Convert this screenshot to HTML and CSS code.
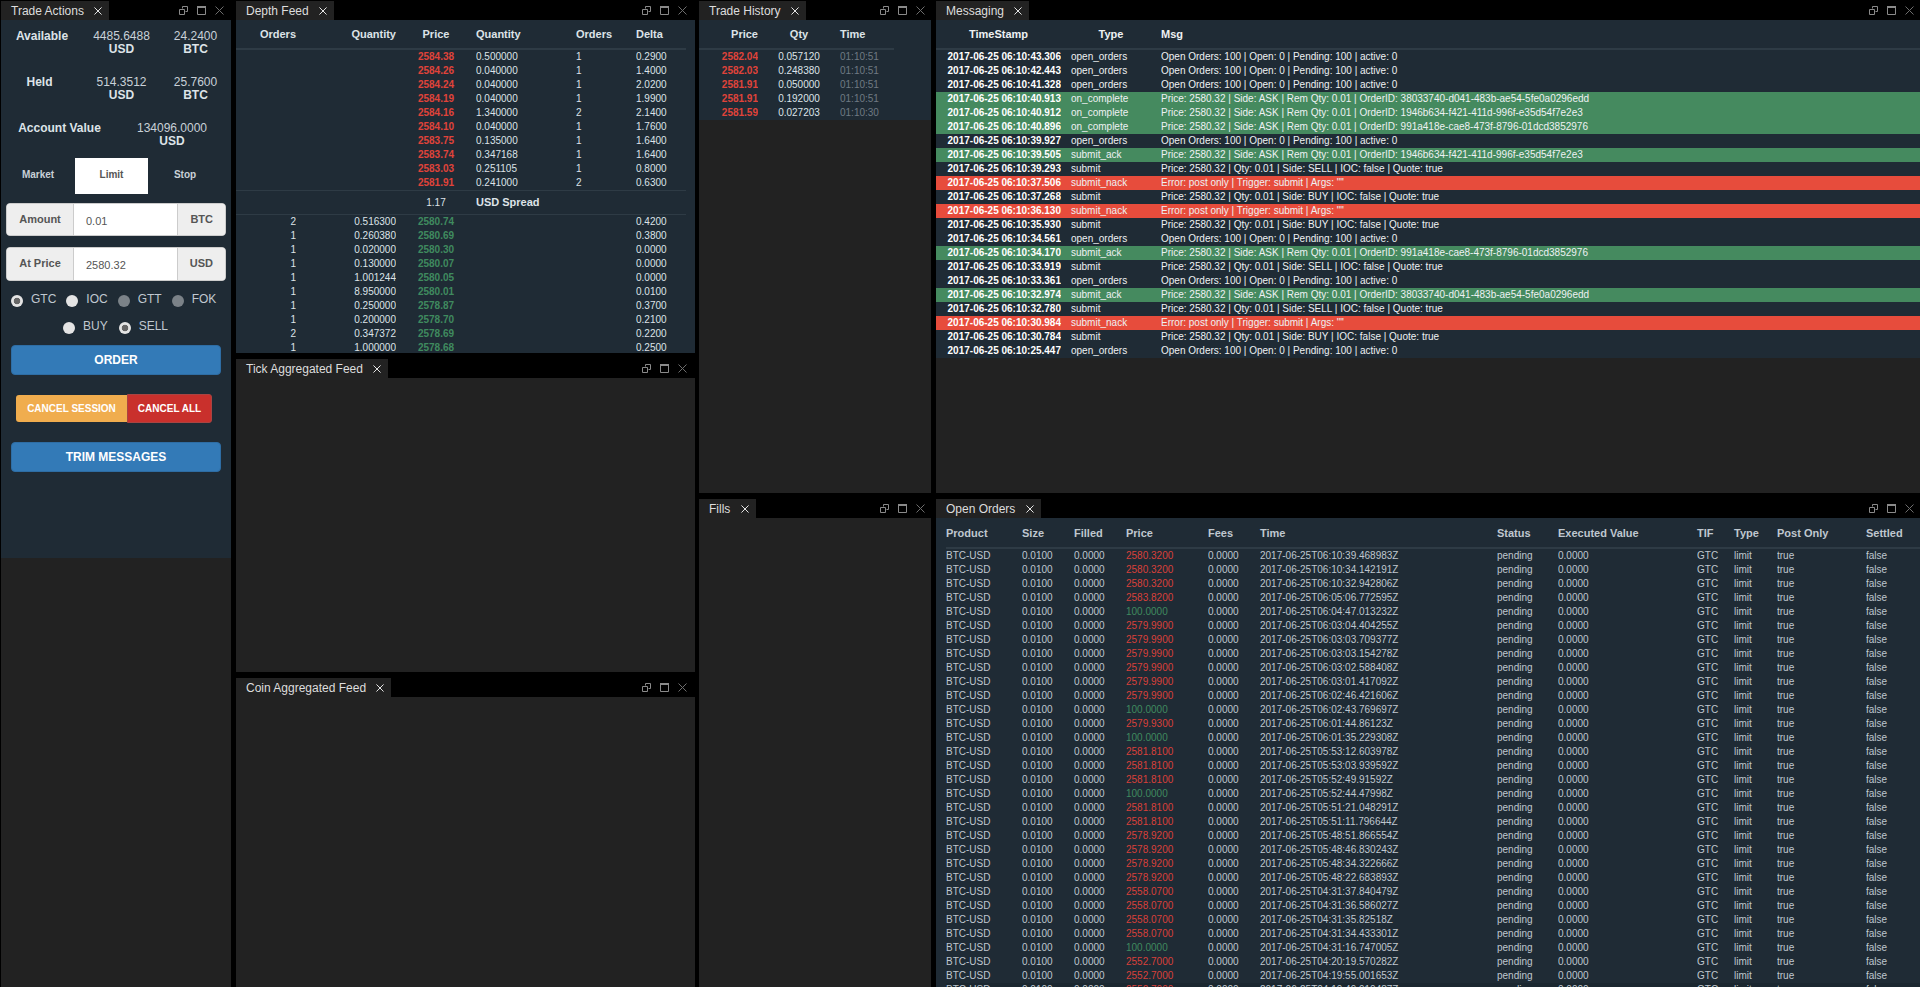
FILE: index.html
```html
<!DOCTYPE html>
<html lang="en">
<head>
    <meta charset="UTF-8">
    <title>Trading Dashboard</title>
    <link rel="stylesheet" href="styles.css">
</head>
<body>
    <svg class="icon-defs" width="0" height="0">
        <symbol id="ic-close" viewBox="0 0 9 9"><path d="M.5.5l8 8M8.5.5l-8 8" fill="none" stroke="currentColor"/></symbol>
        <symbol id="ic-restore" viewBox="0 0 9 9"><path d="M3.5 2.5v-2h5v5h-2M.5 3.5h5v5h-5z" fill="none" stroke="currentColor"/></symbol>
        <symbol id="ic-max" viewBox="0 0 9 9"><path d="M.5 1h8M.5.5v8h8v-8" fill="none" stroke="currentColor" stroke-width="1"/><path d="M0 0h9v2H0z" fill="currentColor"/></symbol>
    </svg>

    <div class="layout">
        <!-- Column 1 -->
        <div class="column col-actions">
            <section class="pane fill">
                <div class="pane-head">
                    <div class="tab">Trade Actions <svg class="tab-close"><use href="#ic-close"/></svg></div>
                    <div class="win-icons">
                        <svg class="ic-restore"><use href="#ic-restore"/></svg>
                        <svg class="ic-max"><use href="#ic-max"/></svg>
                        <svg class="ic-close"><use href="#ic-close"/></svg>
                    </div>
                </div>
                <div class="pane-body">
                    <div class="actions">
                        <div class="balance">
                            <div class="balance-label">Available</div>
                            <div>4485.6488<b>USD</b></div>
                            <div>24.2400<b>BTC</b></div>
                        </div>
                        <div class="balance">
                            <div class="balance-label held-label">Held</div>
                            <div>514.3512<b>USD</b></div>
                            <div>25.7600<b>BTC</b></div>
                        </div>
                        <div class="balance balance-wide">
                            <div class="balance-label">Account Value</div>
                            <div>134096.0000<b>USD</b></div>
                        </div>

                        <div class="order-tabs">
                            <div class="order-tab">Market</div>
                            <div class="order-tab active">Limit</div>
                            <div class="order-tab">Stop</div>
                        </div>

                        <div class="input-group amount-group">
                            <span class="addon addon-left">Amount</span>
                            <input class="field" type="text" value="0.01">
                            <span class="addon addon-right">BTC</span>
                        </div>
                        <div class="input-group price-group">
                            <span class="addon addon-left">At Price</span>
                            <input class="field" type="text" value="2580.32">
                            <span class="addon addon-right">USD</span>
                        </div>

                        <div class="radios radios-tif">
                            <label><input class="radio" type="radio" name="tif" checked>GTC</label>
                            <label><input class="radio" type="radio" name="tif">IOC</label>
                            <label><input class="radio" type="radio" name="tif" disabled>GTT</label>
                            <label><input class="radio" type="radio" name="tif" disabled>FOK</label>
                        </div>
                        <div class="radios radios-side">
                            <label><input class="radio" type="radio" name="side">BUY</label>
                            <label><input class="radio" type="radio" name="side" checked>SELL</label>
                        </div>

                        <button class="btn btn-blue btn-order">ORDER</button>
                        <div class="cancel-group">
                            <button class="btn-cancel session">CANCEL SESSION</button>
                            <button class="btn-cancel all">CANCEL ALL</button>
                        </div>
                        <button class="btn btn-blue btn-trim">TRIM MESSAGES</button>
                    </div>
                </div>
            </section>
        </div>

        <!-- Column 2 -->
        <div class="column col-depth">
            <section class="pane depth-pane">
                <div class="pane-head">
                    <div class="tab">Depth Feed <svg class="tab-close"><use href="#ic-close"/></svg></div>
                    <div class="win-icons">
                        <svg class="ic-restore"><use href="#ic-restore"/></svg>
                        <svg class="ic-max"><use href="#ic-max"/></svg>
                        <svg class="ic-close"><use href="#ic-close"/></svg>
                    </div>
                </div>
                <div class="pane-body navy">
                    <table class="grid depth-table">
                        <colgroup><col class="d1"><col class="d2"><col class="d3"><col class="d4"><col class="d5"><col class="d6"></colgroup>
                        <thead>
                            <tr><th class="right">Orders</th><th class="right">Quantity</th><th class="center">Price</th><th>Quantity</th><th>Orders</th><th>Delta</th></tr>
                        </thead>
                        <tbody>
                            <tr><td></td><td></td><td class="center ask">2584.38</td><td>0.500000</td><td>1</td><td>0.2900</td></tr>
                            <tr><td></td><td></td><td class="center ask">2584.26</td><td>0.040000</td><td>1</td><td>1.4000</td></tr>
                            <tr><td></td><td></td><td class="center ask">2584.24</td><td>0.040000</td><td>1</td><td>2.0200</td></tr>
                            <tr><td></td><td></td><td class="center ask">2584.19</td><td>0.040000</td><td>1</td><td>1.9900</td></tr>
                            <tr><td></td><td></td><td class="center ask">2584.16</td><td>1.340000</td><td>2</td><td>2.1400</td></tr>
                            <tr><td></td><td></td><td class="center ask">2584.10</td><td>0.040000</td><td>1</td><td>1.7600</td></tr>
                            <tr><td></td><td></td><td class="center ask">2583.75</td><td>0.135000</td><td>1</td><td>1.6400</td></tr>
                            <tr><td></td><td></td><td class="center ask">2583.74</td><td>0.347168</td><td>1</td><td>1.6400</td></tr>
                            <tr><td></td><td></td><td class="center ask">2583.03</td><td>0.251105</td><td>1</td><td>0.8000</td></tr>
                            <tr><td></td><td></td><td class="center ask">2581.91</td><td>0.241000</td><td>2</td><td>0.6300</td></tr>
                            <tr class="spread"><td></td><td></td><td class="center">1.17</td><td colspan="3"><b>USD Spread</b></td></tr>
                            <tr><td class="right">2</td><td class="right">0.516300</td><td class="center bid">2580.74</td><td></td><td></td><td>0.4200</td></tr>
                            <tr><td class="right">1</td><td class="right">0.260380</td><td class="center bid">2580.69</td><td></td><td></td><td>0.3800</td></tr>
                            <tr><td class="right">1</td><td class="right">0.020000</td><td class="center bid">2580.30</td><td></td><td></td><td>0.0000</td></tr>
                            <tr><td class="right">1</td><td class="right">0.130000</td><td class="center bid">2580.07</td><td></td><td></td><td>0.0000</td></tr>
                            <tr><td class="right">1</td><td class="right">1.001244</td><td class="center bid">2580.05</td><td></td><td></td><td>0.0000</td></tr>
                            <tr><td class="right">1</td><td class="right">8.950000</td><td class="center bid">2580.01</td><td></td><td></td><td>0.0100</td></tr>
                            <tr><td class="right">1</td><td class="right">0.250000</td><td class="center bid">2578.87</td><td></td><td></td><td>0.3700</td></tr>
                            <tr><td class="right">1</td><td class="right">0.200000</td><td class="center bid">2578.70</td><td></td><td></td><td>0.2100</td></tr>
                            <tr><td class="right">2</td><td class="right">0.347372</td><td class="center bid">2578.69</td><td></td><td></td><td>0.2200</td></tr>
                            <tr><td class="right">1</td><td class="right">1.000000</td><td class="center bid">2578.68</td><td></td><td></td><td>0.2500</td></tr>
                        </tbody>
                    </table>
                </div>
            </section>
            <section class="pane tick-pane">
                <div class="pane-head">
                    <div class="tab">Tick Aggregated Feed <svg class="tab-close"><use href="#ic-close"/></svg></div>
                    <div class="win-icons">
                        <svg class="ic-restore"><use href="#ic-restore"/></svg>
                        <svg class="ic-max"><use href="#ic-max"/></svg>
                        <svg class="ic-close"><use href="#ic-close"/></svg>
                    </div>
                </div>
                <div class="pane-body"></div>
            </section>
            <section class="pane fill">
                <div class="pane-head">
                    <div class="tab">Coin Aggregated Feed <svg class="tab-close"><use href="#ic-close"/></svg></div>
                    <div class="win-icons">
                        <svg class="ic-restore"><use href="#ic-restore"/></svg>
                        <svg class="ic-max"><use href="#ic-max"/></svg>
                        <svg class="ic-close"><use href="#ic-close"/></svg>
                    </div>
                </div>
                <div class="pane-body"></div>
            </section>
        </div>

        <!-- Column 3 -->
        <div class="column col-history">
            <section class="pane top-pane">
                <div class="pane-head">
                    <div class="tab">Trade History <svg class="tab-close"><use href="#ic-close"/></svg></div>
                    <div class="win-icons">
                        <svg class="ic-restore"><use href="#ic-restore"/></svg>
                        <svg class="ic-max"><use href="#ic-max"/></svg>
                        <svg class="ic-close"><use href="#ic-close"/></svg>
                    </div>
                </div>
                <div class="pane-body">
                    <div class="navy history-block">
                        <table class="grid history-table">
                            <colgroup><col class="h1"><col class="h2"><col class="h3"></colgroup>
                            <thead>
                                <tr><th class="right">Price</th><th class="center">Qty</th><th>Time</th></tr>
                            </thead>
                            <tbody>
                                <tr><td class="right ask">2582.04</td><td class="center">0.057120</td><td class="muted">01:10:51</td></tr>
                                <tr><td class="right ask">2582.03</td><td class="center">0.248380</td><td class="muted">01:10:51</td></tr>
                                <tr><td class="right ask">2581.91</td><td class="center">0.050000</td><td class="muted">01:10:51</td></tr>
                                <tr><td class="right ask">2581.91</td><td class="center">0.192000</td><td class="muted">01:10:51</td></tr>
                                <tr><td class="right ask">2581.59</td><td class="center">0.027203</td><td class="muted">01:10:30</td></tr>
                            </tbody>
                        </table>
                    </div>
                </div>
            </section>
            <section class="pane fill">
                <div class="pane-head">
                    <div class="tab">Fills <svg class="tab-close"><use href="#ic-close"/></svg></div>
                    <div class="win-icons">
                        <svg class="ic-restore"><use href="#ic-restore"/></svg>
                        <svg class="ic-max"><use href="#ic-max"/></svg>
                        <svg class="ic-close"><use href="#ic-close"/></svg>
                    </div>
                </div>
                <div class="pane-body"></div>
            </section>
        </div>

        <!-- Column 4 -->
        <div class="column col-messages">
            <section class="pane top-pane">
                <div class="pane-head">
                    <div class="tab">Messaging <svg class="tab-close"><use href="#ic-close"/></svg></div>
                    <div class="win-icons">
                        <svg class="ic-restore"><use href="#ic-restore"/></svg>
                        <svg class="ic-max"><use href="#ic-max"/></svg>
                        <svg class="ic-close"><use href="#ic-close"/></svg>
                    </div>
                </div>
                <div class="pane-body">
                    <table class="grid msg-table navy">
                        <colgroup><col class="m1"><col class="m2"><col class="m3"></colgroup>
                        <thead>
                            <tr><th class="center">TimeStamp</th><th class="center">Type</th><th>Msg</th></tr>
                        </thead>
                        <tbody>
                            <tr><td class="ts">2017-06-25 06:10:43.306</td><td class="type">open_orders</td><td>Open Orders: 100 | Open: 0 | Pending: 100 | active: 0</td></tr>
                            <tr><td class="ts">2017-06-25 06:10:42.443</td><td class="type">open_orders</td><td>Open Orders: 100 | Open: 0 | Pending: 100 | active: 0</td></tr>
                            <tr><td class="ts">2017-06-25 06:10:41.328</td><td class="type">open_orders</td><td>Open Orders: 100 | Open: 0 | Pending: 100 | active: 0</td></tr>
                            <tr class="ok"><td class="ts">2017-06-25 06:10:40.913</td><td class="type">on_complete</td><td>Price: 2580.32 | Side: ASK | Rem Qty: 0.01 | OrderID: 38033740-d041-483b-ae54-5fe0a0296edd</td></tr>
                            <tr class="ok"><td class="ts">2017-06-25 06:10:40.912</td><td class="type">on_complete</td><td>Price: 2580.32 | Side: ASK | Rem Qty: 0.01 | OrderID: 1946b634-f421-411d-996f-e35d54f7e2e3</td></tr>
                            <tr class="ok"><td class="ts">2017-06-25 06:10:40.896</td><td class="type">on_complete</td><td>Price: 2580.32 | Side: ASK | Rem Qty: 0.01 | OrderID: 991a418e-cae8-473f-8796-01dcd3852976</td></tr>
                            <tr><td class="ts">2017-06-25 06:10:39.927</td><td class="type">open_orders</td><td>Open Orders: 100 | Open: 0 | Pending: 100 | active: 0</td></tr>
                            <tr class="ok"><td class="ts">2017-06-25 06:10:39.505</td><td class="type">submit_ack</td><td>Price: 2580.32 | Side: ASK | Rem Qty: 0.01 | OrderID: 1946b634-f421-411d-996f-e35d54f7e2e3</td></tr>
                            <tr><td class="ts">2017-06-25 06:10:39.293</td><td class="type">submit</td><td>Price: 2580.32 | Qty: 0.01 | Side: SELL | IOC: false | Quote: true</td></tr>
                            <tr class="err"><td class="ts">2017-06-25 06:10:37.506</td><td class="type">submit_nack</td><td>Error: post only | Trigger: submit | Args: ""</td></tr>
                            <tr><td class="ts">2017-06-25 06:10:37.268</td><td class="type">submit</td><td>Price: 2580.32 | Qty: 0.01 | Side: BUY | IOC: false | Quote: true</td></tr>
                            <tr class="err"><td class="ts">2017-06-25 06:10:36.130</td><td class="type">submit_nack</td><td>Error: post only | Trigger: submit | Args: ""</td></tr>
                            <tr><td class="ts">2017-06-25 06:10:35.930</td><td class="type">submit</td><td>Price: 2580.32 | Qty: 0.01 | Side: BUY | IOC: false | Quote: true</td></tr>
                            <tr><td class="ts">2017-06-25 06:10:34.561</td><td class="type">open_orders</td><td>Open Orders: 100 | Open: 0 | Pending: 100 | active: 0</td></tr>
                            <tr class="ok"><td class="ts">2017-06-25 06:10:34.170</td><td class="type">submit_ack</td><td>Price: 2580.32 | Side: ASK | Rem Qty: 0.01 | OrderID: 991a418e-cae8-473f-8796-01dcd3852976</td></tr>
                            <tr><td class="ts">2017-06-25 06:10:33.919</td><td class="type">submit</td><td>Price: 2580.32 | Qty: 0.01 | Side: SELL | IOC: false | Quote: true</td></tr>
                            <tr><td class="ts">2017-06-25 06:10:33.361</td><td class="type">open_orders</td><td>Open Orders: 100 | Open: 0 | Pending: 100 | active: 0</td></tr>
                            <tr class="ok"><td class="ts">2017-06-25 06:10:32.974</td><td class="type">submit_ack</td><td>Price: 2580.32 | Side: ASK | Rem Qty: 0.01 | OrderID: 38033740-d041-483b-ae54-5fe0a0296edd</td></tr>
                            <tr><td class="ts">2017-06-25 06:10:32.780</td><td class="type">submit</td><td>Price: 2580.32 | Qty: 0.01 | Side: SELL | IOC: false | Quote: true</td></tr>
                            <tr class="err"><td class="ts">2017-06-25 06:10:30.984</td><td class="type">submit_nack</td><td>Error: post only | Trigger: submit | Args: ""</td></tr>
                            <tr><td class="ts">2017-06-25 06:10:30.784</td><td class="type">submit</td><td>Price: 2580.32 | Qty: 0.01 | Side: BUY | IOC: false | Quote: true</td></tr>
                            <tr><td class="ts">2017-06-25 06:10:25.447</td><td class="type">open_orders</td><td>Open Orders: 100 | Open: 0 | Pending: 100 | active: 0</td></tr>
                        </tbody>
                    </table>
                </div>
            </section>
            <section class="pane fill">
                <div class="pane-head">
                    <div class="tab">Open Orders <svg class="tab-close"><use href="#ic-close"/></svg></div>
                    <div class="win-icons">
                        <svg class="ic-restore"><use href="#ic-restore"/></svg>
                        <svg class="ic-max"><use href="#ic-max"/></svg>
                        <svg class="ic-close"><use href="#ic-close"/></svg>
                    </div>
                </div>
                <div class="pane-body navy orders-body">
                    <table class="grid orders-table">
                        <colgroup><col class="o1"><col class="o2"><col class="o2"><col class="o4"><col class="o2"><col class="o6"><col class="o7"><col class="o8"><col class="o9"><col class="o10"><col class="o11"><col class="o12"></colgroup>
                        <thead>
                            <tr><th>Product</th><th>Size</th><th>Filled</th><th>Price</th><th>Fees</th><th>Time</th><th>Status</th><th>Executed Value</th><th>TIF</th><th>Type</th><th>Post Only</th><th>Settled</th></tr>
                        </thead>
                        <tbody>
                            <tr><td>BTC-USD</td><td>0.0100</td><td>0.0000</td><td class="sell">2580.3200</td><td>0.0000</td><td>2017-06-25T06:10:39.468983Z</td><td>pending</td><td>0.0000</td><td>GTC</td><td>limit</td><td>true</td><td>false</td></tr>
                            <tr><td>BTC-USD</td><td>0.0100</td><td>0.0000</td><td class="sell">2580.3200</td><td>0.0000</td><td>2017-06-25T06:10:34.142191Z</td><td>pending</td><td>0.0000</td><td>GTC</td><td>limit</td><td>true</td><td>false</td></tr>
                            <tr><td>BTC-USD</td><td>0.0100</td><td>0.0000</td><td class="sell">2580.3200</td><td>0.0000</td><td>2017-06-25T06:10:32.942806Z</td><td>pending</td><td>0.0000</td><td>GTC</td><td>limit</td><td>true</td><td>false</td></tr>
                            <tr><td>BTC-USD</td><td>0.0100</td><td>0.0000</td><td class="sell">2583.8200</td><td>0.0000</td><td>2017-06-25T06:05:06.772595Z</td><td>pending</td><td>0.0000</td><td>GTC</td><td>limit</td><td>true</td><td>false</td></tr>
                            <tr><td>BTC-USD</td><td>0.0100</td><td>0.0000</td><td class="buy">100.0000</td><td>0.0000</td><td>2017-06-25T06:04:47.013232Z</td><td>pending</td><td>0.0000</td><td>GTC</td><td>limit</td><td>true</td><td>false</td></tr>
                            <tr><td>BTC-USD</td><td>0.0100</td><td>0.0000</td><td class="sell">2579.9900</td><td>0.0000</td><td>2017-06-25T06:03:04.404255Z</td><td>pending</td><td>0.0000</td><td>GTC</td><td>limit</td><td>true</td><td>false</td></tr>
                            <tr><td>BTC-USD</td><td>0.0100</td><td>0.0000</td><td class="sell">2579.9900</td><td>0.0000</td><td>2017-06-25T06:03:03.709377Z</td><td>pending</td><td>0.0000</td><td>GTC</td><td>limit</td><td>true</td><td>false</td></tr>
                            <tr><td>BTC-USD</td><td>0.0100</td><td>0.0000</td><td class="sell">2579.9900</td><td>0.0000</td><td>2017-06-25T06:03:03.154278Z</td><td>pending</td><td>0.0000</td><td>GTC</td><td>limit</td><td>true</td><td>false</td></tr>
                            <tr><td>BTC-USD</td><td>0.0100</td><td>0.0000</td><td class="sell">2579.9900</td><td>0.0000</td><td>2017-06-25T06:03:02.588408Z</td><td>pending</td><td>0.0000</td><td>GTC</td><td>limit</td><td>true</td><td>false</td></tr>
                            <tr><td>BTC-USD</td><td>0.0100</td><td>0.0000</td><td class="sell">2579.9900</td><td>0.0000</td><td>2017-06-25T06:03:01.417092Z</td><td>pending</td><td>0.0000</td><td>GTC</td><td>limit</td><td>true</td><td>false</td></tr>
                            <tr><td>BTC-USD</td><td>0.0100</td><td>0.0000</td><td class="sell">2579.9900</td><td>0.0000</td><td>2017-06-25T06:02:46.421606Z</td><td>pending</td><td>0.0000</td><td>GTC</td><td>limit</td><td>true</td><td>false</td></tr>
                            <tr><td>BTC-USD</td><td>0.0100</td><td>0.0000</td><td class="buy">100.0000</td><td>0.0000</td><td>2017-06-25T06:02:43.769697Z</td><td>pending</td><td>0.0000</td><td>GTC</td><td>limit</td><td>true</td><td>false</td></tr>
                            <tr><td>BTC-USD</td><td>0.0100</td><td>0.0000</td><td class="sell">2579.9300</td><td>0.0000</td><td>2017-06-25T06:01:44.86123Z</td><td>pending</td><td>0.0000</td><td>GTC</td><td>limit</td><td>true</td><td>false</td></tr>
                            <tr><td>BTC-USD</td><td>0.0100</td><td>0.0000</td><td class="buy">100.0000</td><td>0.0000</td><td>2017-06-25T06:01:35.229308Z</td><td>pending</td><td>0.0000</td><td>GTC</td><td>limit</td><td>true</td><td>false</td></tr>
                            <tr><td>BTC-USD</td><td>0.0100</td><td>0.0000</td><td class="sell">2581.8100</td><td>0.0000</td><td>2017-06-25T05:53:12.603978Z</td><td>pending</td><td>0.0000</td><td>GTC</td><td>limit</td><td>true</td><td>false</td></tr>
                            <tr><td>BTC-USD</td><td>0.0100</td><td>0.0000</td><td class="sell">2581.8100</td><td>0.0000</td><td>2017-06-25T05:53:03.939592Z</td><td>pending</td><td>0.0000</td><td>GTC</td><td>limit</td><td>true</td><td>false</td></tr>
                            <tr><td>BTC-USD</td><td>0.0100</td><td>0.0000</td><td class="sell">2581.8100</td><td>0.0000</td><td>2017-06-25T05:52:49.91592Z</td><td>pending</td><td>0.0000</td><td>GTC</td><td>limit</td><td>true</td><td>false</td></tr>
                            <tr><td>BTC-USD</td><td>0.0100</td><td>0.0000</td><td class="buy">100.0000</td><td>0.0000</td><td>2017-06-25T05:52:44.47998Z</td><td>pending</td><td>0.0000</td><td>GTC</td><td>limit</td><td>true</td><td>false</td></tr>
                            <tr><td>BTC-USD</td><td>0.0100</td><td>0.0000</td><td class="sell">2581.8100</td><td>0.0000</td><td>2017-06-25T05:51:21.048291Z</td><td>pending</td><td>0.0000</td><td>GTC</td><td>limit</td><td>true</td><td>false</td></tr>
                            <tr><td>BTC-USD</td><td>0.0100</td><td>0.0000</td><td class="sell">2581.8100</td><td>0.0000</td><td>2017-06-25T05:51:11.796644Z</td><td>pending</td><td>0.0000</td><td>GTC</td><td>limit</td><td>true</td><td>false</td></tr>
                            <tr><td>BTC-USD</td><td>0.0100</td><td>0.0000</td><td class="sell">2578.9200</td><td>0.0000</td><td>2017-06-25T05:48:51.866554Z</td><td>pending</td><td>0.0000</td><td>GTC</td><td>limit</td><td>true</td><td>false</td></tr>
                            <tr><td>BTC-USD</td><td>0.0100</td><td>0.0000</td><td class="sell">2578.9200</td><td>0.0000</td><td>2017-06-25T05:48:46.830243Z</td><td>pending</td><td>0.0000</td><td>GTC</td><td>limit</td><td>true</td><td>false</td></tr>
                            <tr><td>BTC-USD</td><td>0.0100</td><td>0.0000</td><td class="sell">2578.9200</td><td>0.0000</td><td>2017-06-25T05:48:34.322666Z</td><td>pending</td><td>0.0000</td><td>GTC</td><td>limit</td><td>true</td><td>false</td></tr>
                            <tr><td>BTC-USD</td><td>0.0100</td><td>0.0000</td><td class="sell">2578.9200</td><td>0.0000</td><td>2017-06-25T05:48:22.683893Z</td><td>pending</td><td>0.0000</td><td>GTC</td><td>limit</td><td>true</td><td>false</td></tr>
                            <tr><td>BTC-USD</td><td>0.0100</td><td>0.0000</td><td class="sell">2558.0700</td><td>0.0000</td><td>2017-06-25T04:31:37.840479Z</td><td>pending</td><td>0.0000</td><td>GTC</td><td>limit</td><td>true</td><td>false</td></tr>
                            <tr><td>BTC-USD</td><td>0.0100</td><td>0.0000</td><td class="sell">2558.0700</td><td>0.0000</td><td>2017-06-25T04:31:36.586027Z</td><td>pending</td><td>0.0000</td><td>GTC</td><td>limit</td><td>true</td><td>false</td></tr>
                            <tr><td>BTC-USD</td><td>0.0100</td><td>0.0000</td><td class="sell">2558.0700</td><td>0.0000</td><td>2017-06-25T04:31:35.82518Z</td><td>pending</td><td>0.0000</td><td>GTC</td><td>limit</td><td>true</td><td>false</td></tr>
                            <tr><td>BTC-USD</td><td>0.0100</td><td>0.0000</td><td class="sell">2558.0700</td><td>0.0000</td><td>2017-06-25T04:31:34.433301Z</td><td>pending</td><td>0.0000</td><td>GTC</td><td>limit</td><td>true</td><td>false</td></tr>
                            <tr><td>BTC-USD</td><td>0.0100</td><td>0.0000</td><td class="buy">100.0000</td><td>0.0000</td><td>2017-06-25T04:31:16.747005Z</td><td>pending</td><td>0.0000</td><td>GTC</td><td>limit</td><td>true</td><td>false</td></tr>
                            <tr><td>BTC-USD</td><td>0.0100</td><td>0.0000</td><td class="sell">2552.7000</td><td>0.0000</td><td>2017-06-25T04:20:19.570282Z</td><td>pending</td><td>0.0000</td><td>GTC</td><td>limit</td><td>true</td><td>false</td></tr>
                            <tr><td>BTC-USD</td><td>0.0100</td><td>0.0000</td><td class="sell">2552.7000</td><td>0.0000</td><td>2017-06-25T04:19:55.001653Z</td><td>pending</td><td>0.0000</td><td>GTC</td><td>limit</td><td>true</td><td>false</td></tr>
                            <tr class="row-last"><td>BTC-USD</td><td>0.0100</td><td>0.0000</td><td class="sell">2552.7000</td><td>0.0000</td><td>2017-06-25T04:19:49.910487Z</td><td>pending</td><td>0.0000</td><td>GTC</td><td>limit</td><td>true</td><td>false</td></tr>
                        </tbody>
                    </table>
                </div>
            </section>
        </div>
    </div>
</body>
</html>
```

FILE: styles.css
```css
/* General */
html, body {
    margin: 0;
    height: 100%;
    overflow: hidden;
}

body {
    background-color: #000;
    color: #dde3e8;
    font-family: "Liberation Sans", Arial, sans-serif;
    font-size: 12px;
    line-height: 14px;
}

.icon-defs {
    position: absolute;
}

.layout {
    display: flex;
    height: 987px;
}

/* Columns */
.column {
    display: flex;
    flex-direction: column;
    height: 987px;
}

.col-actions { width: 230px; margin-left: 1px; }
.col-depth { width: 459px; margin-left: 5px; }
.col-history { width: 232px; margin-left: 4px; }
.col-messages { width: 984px; margin-left: 5px; }

.col-actions .win-icons { margin-right: 7px; }
.col-depth .win-icons { margin-right: 8px; }

/* Panes */
.pane {
    display: flex;
    flex-direction: column;
    overflow: hidden;
}

.pane.fill { flex: 1; min-height: 0; }
.depth-pane { height: 353px; }
.tick-pane { height: 319px; }
.top-pane { height: 493px; }

.pane-head {
    display: flex;
    align-items: flex-end;
    justify-content: space-between;
    flex: none;
    height: 25px;
    background-color: #000;
}

.pane:first-child .pane-head { height: 20px; }

.pane-body {
    flex: 1;
    min-height: 0;
    overflow: hidden;
    background-color: #222;
}

.navy { background-color: #1f2b35; }

.tab {
    display: flex;
    align-items: center;
    height: 19px;
    padding: 0 7px 0 10px;
    background-color: #222;
    color: #ddd;
    white-space: pre;
}

.tab-close {
    width: 8px;
    height: 8px;
    margin-left: 7px;
    color: #fff;
}

.win-icons {
    display: flex;
    gap: 9px;
    margin: 0 6px 5px 0;
}

.win-icons svg {
    display: block;
    width: 9px;
    height: 9px;
}

.ic-restore { color: #8a8a8a; }
.ic-max { color: #8a8a8a; }
.ic-close { color: #6e6e6e; }

/* Trade actions */
.actions {
    height: 538px;
    padding-top: 10px;
    box-sizing: border-box;
    background-color: #1f2b35;
    color: #c9d1d8;
}

.balance {
    display: grid;
    grid-template-columns: 82px 77px 71px;
    height: 46px;
    line-height: 13px;
    text-align: center;
}

.balance b {
    display: block;
    color: #dde3e8;
}

.balance-label { font-weight: bold; color: #dde3e8; }
.held-label { padding-right: 5px; }
.balance-wide { grid-template-columns: 117px 108px; height: 36px; }

.order-tabs {
    display: flex;
    height: 36px;
    font-size: 10px;
    font-weight: bold;
    line-height: 34px;
    text-align: center;
}

.order-tab { width: 74px; }

.order-tab.active {
    width: 73px;
    background-color: #fff;
    color: #555;
}

.input-group {
    display: flex;
    width: 220px;
    margin-left: 5px;
    box-sizing: border-box;
    border: 1px solid #ccc;
    border-radius: 4px;
    overflow: hidden;
    background-color: #fff;
    font-size: 11px;
}

.amount-group { height: 33px; margin-top: 9px; }
.price-group { height: 34px; margin-top: 11px; }

.addon {
    background-color: #eee;
    color: #555;
    font-weight: bold;
    line-height: 30px;
    text-align: center;
}

.addon-left { width: 66px; border-right: 1px solid #ccc; }
.addon-right { flex: none; padding: 0 12px; border-left: 1px solid #ccc; }

.field {
    flex: 1;
    min-width: 0;
    padding: 2px 0 0 12px;
    border: 0;
    outline: 0;
    color: #555;
    font-family: inherit;
    font-size: 11px;
}

.radios {
    display: flex;
    height: 14px;
    color: #c0c8d0;
}

.radios label { display: flex; }

.radios-tif { margin-top: 11px; padding-left: 10px; gap: 10px; }
.radios-side { margin-top: 13px; padding-left: 62px; gap: 11px; }

.radio {
    appearance: none;
    flex: none;
    width: 12px;
    height: 12px;
    margin: 3px 8px 0 0;
    border-radius: 50%;
    background-color: #e4e4e4;
}

.radio:checked {
    background: radial-gradient(circle, #666 0, #666 3px, #e4e4e4 3.6px);
}

.radio:disabled { background-color: #7b8288; }

.btn {
    display: block;
    width: 210px;
    height: 30px;
    margin-left: 10px;
    border: 1px solid #2e6da4;
    border-radius: 4px;
    color: #fff;
    font-family: inherit;
    font-size: 12px;
    font-weight: bold;
}

.btn-blue { background-color: #337ab7; }
.btn-order { margin-top: 12px; }
.btn-trim { margin-top: 19px; }

.cancel-group {
    display: flex;
    align-items: center;
    height: 29px;
    margin: 19px 0 0 15px;
}

.btn-cancel {
    height: 27px;
    padding: 0;
    border: 0;
    color: #fff;
    font-family: inherit;
    font-size: 10px;
    font-weight: bold;
}

.btn-cancel.session {
    width: 111px;
    border-radius: 3px 0 0 3px;
    background-color: #f0ad4e;
}

.btn-cancel.all {
    width: 85px;
    height: 29px;
    border: 1px solid #a94442;
    border-radius: 0 3px 3px 0;
    background-color: #c9302c;
}

/* Tables */
.grid {
    border-collapse: collapse;
    table-layout: fixed;
    font-size: 10px;
    white-space: nowrap;
}

.grid th {
    height: 28px;
    padding: 0;
    border-bottom: 2px solid #2e3b45;
    font-size: 11px;
    font-weight: bold;
    text-align: left;
}

.grid td {
    height: 14px;
    padding: 0;
    overflow: hidden;
}

.grid b { font-size: 11px; }

.grid .right { text-align: right; }
.grid .center { text-align: center; }

.ask { color: #e0433a; font-weight: bold; }
.bid { color: #3f8a5f; font-weight: bold; }
.muted { color: #6f7a83; }

.depth-table { width: 450px; }
.d1 { width: 60px; }
.d2 { width: 100px; }
.d3 { width: 80px; }
.d4 { width: 100px; }
.d5 { width: 60px; }
.d6 { width: 50px; }

.spread td {
    height: 23px;
    border-top: 1px solid #2e3b45;
    border-bottom: 1px solid #2e3b45;
}

.history-block { height: 100px; }
.history-table { width: 195px; }
.h1 { width: 59px; }
.h2 { width: 82px; }
.h3 { width: 54px; }

.msg-table { width: 984px; color: #eef1f3; }
.m1 { width: 125px; }
.m2 { width: 100px; }
.msg-table .ts { color: #fff; font-weight: bold; text-align: right; }
.msg-table .type { padding-left: 10px; }
.msg-table .ok { background-color: #458a5f; }
.msg-table .err { background-color: #e74c3c; }

.orders-body { padding-left: 10px; }
.orders-table { width: 974px; color: #bfc7cf; }
.orders-table th { height: 29px; }
.o1 { width: 76px; }
.o2 { width: 52px; }
.o4 { width: 82px; }
.o6 { width: 237px; }
.o7 { width: 61px; }
.o8 { width: 139px; }
.o9 { width: 37px; }
.o10 { width: 43px; }
.o11 { width: 89px; }
.o12 { width: 54px; }

.sell { color: #d9403a; }
.buy { color: #3f8a5f; }
.row-last { background-color: #1b2730; }
```
